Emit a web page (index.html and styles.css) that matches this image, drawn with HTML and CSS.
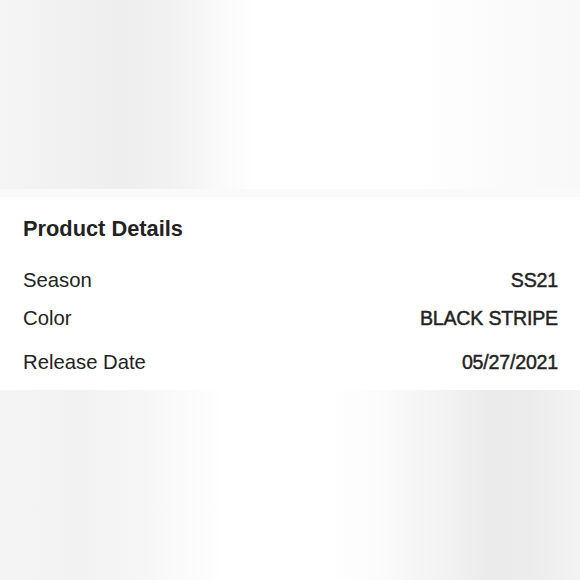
FILE: index.html
```html
<!DOCTYPE html>
<html>
<head>
<meta charset="utf-8">
<link rel="stylesheet" href="styles.css">
</head>
<body>
<div class="page">
  <div class="photo photo-top"></div>
  <div class="strip"></div>
  <section class="details">
    <h2 class="title">Product Details</h2>
    <div class="rows">
      <div class="row"><span class="label">Season</span><span class="value">SS21</span></div>
      <div class="row"><span class="label">Color</span><span class="value">BLACK STRIPE</span></div>
      <div class="row row-last"><span class="label">Release Date</span><span class="value">05/27/2021</span></div>
    </div>
  </section>
  <div class="photo photo-bottom"></div>
</div>
</body>
</html>
```

FILE: styles.css
```css
html, body {
  margin: 0;
  padding: 0;
  width: 580px;
  height: 580px;
  overflow: hidden;
  background: #ffffff;
}
.page {
  display: flex;
  flex-direction: column;
  height: 580px;
  font-family: "Liberation Sans", Arial, sans-serif;
  color: #222222;
}
.photo {
  flex: 0 0 auto;
}
.photo-top {
  height: 189px;
  background: linear-gradient(90deg, #f5f5f5 0px, #f0f0f0 80px, #eeeeee 120px, #f1f1f1 170px, #f9f9f9 215px, #ffffff 255px, #ffffff 420px, #fcfcfc 470px, #f9f9f9 540px, #f8f8f8 580px);
}
.strip {
  height: 8px;
  background: #fafafa;
}
.details {
  background: #ffffff;
  padding: 19px 22px 16px 23px;
}
.title {
  margin: 0;
  font-size: 21.8px;
  line-height: 26px;
  font-weight: 700;
  color: #222222;
}
.rows {
  display: flex;
  flex-direction: column;
  gap: 14px;
  margin-top: 26px;
}
.row {
  display: flex;
  justify-content: space-between;
  align-items: baseline;
  font-size: 20.3px;
  line-height: 24px;
}
.row-last {
  margin-top: 6px;
}
.label {
  color: #222222;
}
.value {
  font-weight: 400;
  font-size: 19.6px;
  letter-spacing: -0.2px;
  -webkit-text-stroke: 0.45px #222222;
  color: #222222;
}
.photo-bottom {
  flex: 1 1 auto;
  background: linear-gradient(90deg, #f4f4f4 0px, #f2f2f2 80px, #f6f6f6 140px, #fbfbfb 190px, #ffffff 225px, #ffffff 330px, #fbfbfb 380px, #f3f3f3 440px, #ebebeb 490px, #ececec 530px, #f3f3f3 580px);
}
```
